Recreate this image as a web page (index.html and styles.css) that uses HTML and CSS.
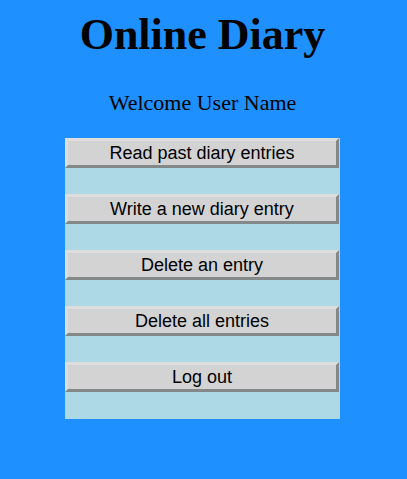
FILE: index.html
```html
<!DOCTYPE html>
<html lang="en">
<head>
<meta charset="utf-8">
<meta name="viewport" content="width=device-width, initial-scale=1">
<title>Online Diary</title>
<link rel="stylesheet" href="styles.css">
</head>
<body>
<main class="page">
<h1 class="title">Online Diary</h1>
<p class="welcome">Welcome User Name</p>
<nav class="menu" aria-label="Diary actions">
<button class="menu-button" type="button">Read past diary entries</button>
<button class="menu-button" type="button">Write a new diary entry</button>
<button class="menu-button" type="button">Delete an entry</button>
<button class="menu-button" type="button">Delete all entries</button>
<button class="menu-button" type="button">Log out</button>
</nav>
</main>
</body>
</html>
```

FILE: styles.css
```css
body {
  margin: 0;
  background: dodgerblue;
  color: black;
  font-family: "Liberation Serif", "Times New Roman", serif;
}

.page {
  display: flex;
  flex-direction: column;
  align-items: center;
  padding: 8px 2px 60px 0;
}

.title {
  margin: 0;
  font-size: 44px;
  line-height: 54px;
}

.welcome {
  margin: 28px 0 22px;
  font-size: 22px;
  line-height: 26px;
}

.menu {
  display: flex;
  flex-direction: column;
  gap: 26px;
  box-sizing: border-box;
  width: 68%;
  padding: 0 1px 27px 0;
  background: lightblue;
}

.menu-button {
  width: 100%;
  height: 30px;
  padding: 0;
  border: 3px solid;
  border-color: #dedede #848888 #848888 #dedede;
  background: lightgray;
  color: black;
  font-family: "Liberation Sans", Arial, sans-serif;
  font-size: 18px;
  line-height: 20px;
}
```
